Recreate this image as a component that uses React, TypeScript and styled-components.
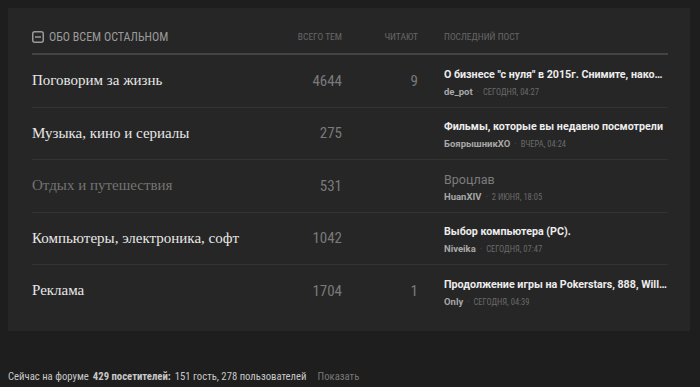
import styled, { createGlobalStyle } from "styled-components";

const GlobalStyle = createGlobalStyle`
  html, body {
    margin: 0;
    padding: 0;
    background: #1e1e1e;
  }
  body {
    font-family: Roboto, "Liberation Sans", sans-serif;
  }
`;

const condensed = `"Liberation Sans Narrow", "Roboto Condensed", Roboto, sans-serif`;

const Page = styled.div`
  width: 700px;
  height: 387px;
  padding: 8px 8px 0;
  box-sizing: border-box;
  display: flex;
  flex-direction: column;
`;

const Panel = styled.section`
  width: 682px;
  background: #262626;
  padding: 20px 22px 14px 24px;
  box-sizing: border-box;
`;

const Grid = styled.div`
  display: grid;
  grid-template-columns: 1fr 80px 76px 250px;
`;

const HeadRow = styled(Grid)`
  height: 25px;
  align-items: start;
  border-bottom: 2px solid #434343;
`;

const SectionTitle = styled.div`
  display: flex;
  align-items: center;
  gap: 5px;
  font-family: ${condensed};
  font-size: 12px;
  color: #9a9a9a;
  text-transform: uppercase;
  line-height: 18px;
`;

const ColHead = styled.div<{ $left?: boolean }>`
  font-family: ${condensed};
  font-size: 9.5px;
  color: #666;
  text-transform: uppercase;
  line-height: 18px;
  text-align: ${(p) => (p.$left ? "left" : "right")};
  padding-left: ${(p) => (p.$left ? "26px" : "0")};
`;

const Row = styled(Grid)`
  height: 51.5px;
  align-items: center;
  border-bottom: 1px solid #333;
  &:last-child {
    border-bottom: none;
  }
`;

const ForumName = styled.a<{ $muted?: boolean }>`
  font-family: "Liberation Serif", "DejaVu Serif", serif;
  font-size: 15px;
  color: ${(p) => (p.$muted ? "#747474" : "#e8e8e8")};
  text-decoration: none;
  white-space: nowrap;
`;

const Count = styled.div`
  font-family: ${condensed};
  font-size: 15px;
  color: #7a7a7a;
  text-align: right;
`;

const LastPost = styled.div`
  padding-left: 26px;
  min-width: 0;
  display: flex;
  flex-direction: column;
  gap: 3px;
  padding-top: 4px;
`;

const PostTitle = styled.a<{ $muted?: boolean }>`
  font-family: Roboto, "Liberation Sans", sans-serif;
  font-size: ${(p) => (p.$muted ? "12.5px" : "10.7px")};
  font-weight: ${(p) => (p.$muted ? 400 : 700)};
  color: ${(p) => (p.$muted ? "#7c7c7c" : "#ececec")};
  white-space: nowrap;
  overflow: hidden;
  text-overflow: ellipsis;
  line-height: 15px;
`;

const Meta = styled.div`
  display: flex;
  align-items: baseline;
  gap: 4px;
  line-height: 13px;
`;

const Author = styled.span`
  font-family: Roboto, "Liberation Sans", sans-serif;
  font-size: 9.5px;
  font-weight: 700;
  color: #a8a8a8;
`;

const Dot = styled.span`
  color: #555;
  font-size: 9px;
`;

const Time = styled.span`
  font-family: ${condensed};
  font-size: 8.5px;
  color: #6a6a6a;
  text-transform: uppercase;
`;

const Footer = styled.div`
  margin-top: auto;
  font-family: ${condensed};
  font-size: 10.7px;
  line-height: 20px;
  color: #c8c8c8;
  display: flex;
  gap: 4px;
  white-space: nowrap;
`;

const Strong = styled.b`
  font-weight: 700;
`;

const ShowLink = styled.a`
  color: #777;
  margin-left: 7px;
`;

const forums = [
  { name: "Поговорим за жизнь", topics: "4644", readers: "9", post: "О бизнесе \"с нуля\" в 2015г. Снимите, наконец, розовые очки", author: "de_pot", time: "Сегодня, 04:27" },
  { name: "Музыка, кино и сериалы", topics: "275", readers: "", post: "Фильмы, которые вы недавно посмотрели", author: "БоярышникХО", time: "Вчера, 04:24" },
  { name: "Отдых и путешествия", topics: "531", readers: "", post: "Вроцлав", author: "HuanXIV", time: "2 июня, 18:05", muted: true },
  { name: "Компьютеры, электроника, софт", topics: "1042", readers: "", post: "Выбор компьютера (PC).", author: "Niveika", time: "Сегодня, 07:47" },
  { name: "Реклама", topics: "1704", readers: "1", post: "Продолжение игры на Pokerstars, 888, William Hill", author: "Only", time: "Сегодня, 04:39" },
];

function CollapseIcon() {
  return (
    <svg width="12" height="12" viewBox="0 0 12 12" fill="none">
      <rect x="0.75" y="0.75" width="10.5" height="10.5" rx="2" stroke="#9a9a9a" strokeWidth="1.5" />
      <line x1="3" y1="6" x2="9" y2="6" stroke="#9a9a9a" strokeWidth="1.5" />
    </svg>
  );
}

export default function App() {
  return (
    <>
      <GlobalStyle />
      <Page>
        <Panel>
          <HeadRow>
            <SectionTitle>
              <CollapseIcon />
              Обо всем остальном
            </SectionTitle>
            <ColHead>Всего тем</ColHead>
            <ColHead>Читают</ColHead>
            <ColHead $left>Последний пост</ColHead>
          </HeadRow>
          {forums.map((f) => (
            <Row key={f.name}>
              <ForumName $muted={f.muted}>{f.name}</ForumName>
              <Count>{f.topics}</Count>
              <Count>{f.readers}</Count>
              <LastPost>
                <PostTitle $muted={f.muted}>{f.post}</PostTitle>
                <Meta>
                  <Author>{f.author}</Author>
                  <Dot>·</Dot>
                  <Time>{f.time}</Time>
                </Meta>
              </LastPost>
            </Row>
          ))}
        </Panel>
        <Footer>
          Сейчас на форуме <Strong>429 посетителей:</Strong> 151 гость, 278 пользователей
          <ShowLink>Показать</ShowLink>
        </Footer>
      </Page>
    </>
  );
}
